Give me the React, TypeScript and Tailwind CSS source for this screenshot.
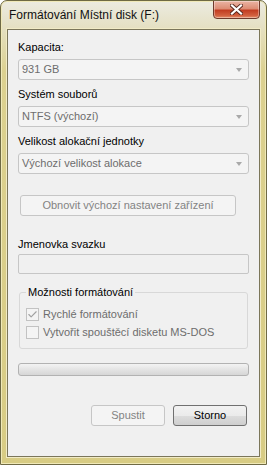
import { Check } from "lucide-react";

const font = { fontFamily: '"Liberation Sans", Arial, sans-serif' };

const Combo = ({ value }: { value: string }) => (
  <div className="flex h-[21px] items-center justify-between rounded-[3px] border border-[#c6c6c6] bg-[#f4f4f4] pl-[3px] pr-[6px] text-[#6d6d6d]">
    <span>{value}</span>
    <span className="h-0 w-0 border-x-[3.5px] border-t-[4px] border-x-transparent border-t-[#a9a9a9]" />
  </div>
);

const Label = ({ children }: { children: string }) => (
  <div className="h-[15px] leading-[15px] text-black">{children}</div>
);

const Checkbox = ({ checked, label }: { checked?: boolean; label: string }) => (
  <div className="flex h-[13px] items-center gap-[4px] text-[#6d6d6d]">
    <div className="flex h-[13px] w-[13px] items-center justify-center border border-[#c2c2c2] bg-[#f4f4f4]">
      {checked && <Check size={11} strokeWidth={2.5} className="text-[#a2a2a2]" />}
    </div>
    <span>{label}</span>
  </div>
);

export default function App() {
  return (
    <div
      className="relative h-[465px] w-[267px] overflow-hidden rounded-t-[7px] border border-[#6f6a44] bg-[linear-gradient(180deg,#ecebe1_0px,#e6e2c8_22px,#dcd190_70px,#d8cc84_100%)] text-[11px] shadow-[inset_0_0_0_1px_#f0e9b8]"
      style={font}
    >
      {/* title bar */}
      <div className="flex h-[28px] items-center pl-[8px] text-[12px] text-[#111]">
        Formátování Místní disk (F:)
      </div>

      {/* close button */}
      <div className="absolute right-[6px] top-[-1px] flex h-[19px] w-[47px] items-center justify-center rounded-b-[4px] border border-[#6e3a2c] bg-[linear-gradient(180deg,#eab4a4_0%,#dc8d75_45%,#c23d22_55%,#d2603f_85%,#e5906c_100%)] shadow-[inset_0_0_0_1px_rgba(255,255,255,0.35)]">
        <svg width="13" height="11" viewBox="0 0 13 11">
          <path
            d="M2 1.5 L11 9.5 M11 1.5 L2 9.5"
            stroke="#5a2a20"
            strokeWidth="4"
            strokeLinecap="square"
          />
          <path
            d="M2 1.5 L11 9.5 M11 1.5 L2 9.5"
            stroke="#ffffff"
            strokeWidth="2.2"
            strokeLinecap="square"
          />
        </svg>
      </div>

      {/* client area */}
      <div className="mx-[6px] h-[428px] border border-[#7b765a] bg-[#f0f0f0] px-[10px] pt-[10px] shadow-[0_0_0_1px_#f1ebc6]">
        <div className="w-[231px]">
          <Label>Kapacita:</Label>
          <div className="mt-[4px]">
            <Combo value="931 GB" />
          </div>

          <div className="mt-[7px]">
            <Label>Systém souborů</Label>
          </div>
          <div className="mt-[4px]">
            <Combo value="NTFS (výchozí)" />
          </div>

          <div className="mt-[7px]">
            <Label>Velikost alokační jednotky</Label>
          </div>
          <div className="mt-[4px]">
            <Combo value="Výchozí velikost alokace" />
          </div>

          <div className="ml-[2px] mt-[21px] flex h-[21px] w-[216px] items-center justify-center rounded-[3px] border border-[#c6c6c6] bg-[#f4f4f4] text-[#838383]">
            Obnovit výchozí nastavení zařízení
          </div>

          <div className="mt-[21px]">
            <Label>Jmenovka svazku</Label>
          </div>
          <div className="mt-[2px] h-[20px] rounded-[2px] border border-[#c6c6c6] bg-[#f0f0f0]" />

          <div className="relative ml-[1px] mt-[18px] h-[57px] w-[229px] rounded-[3px] border border-[#d8d8d8] px-[6px] pt-[15px]">
            <div className="absolute left-[6px] top-[-8px] bg-[#f0f0f0] px-[2px] leading-[15px] text-black">
              Možnosti formátování
            </div>
            <Checkbox checked label="Rychlé formátování" />
            <div className="mt-[5px]">
              <Checkbox label="Vytvořit spouštěcí disketu MS-DOS" />
            </div>
          </div>

          <div className="mt-[14px] h-[13px] rounded-[3px] border border-[#b2b2b2] bg-[linear-gradient(180deg,#f3f3f3_0%,#e4e4e4_50%,#d6d6d6_100%)]" />

          <div className="mt-[29px] flex justify-end gap-[8px] pr-[2px]">
            <div className="flex h-[21px] w-[74px] items-center justify-center rounded-[3px] border border-[#c6c6c6] bg-[#f4f4f4] text-[#838383]">
              Spustit
            </div>
            <div className="flex h-[21px] w-[74px] items-center justify-center rounded-[3px] border border-[#707070] bg-[linear-gradient(180deg,#f2f2f2_0%,#ebebeb_50%,#dddddd_51%,#cfcfcf_100%)] text-black">
              Storno
            </div>
          </div>
        </div>
      </div>
    </div>
  );
}
